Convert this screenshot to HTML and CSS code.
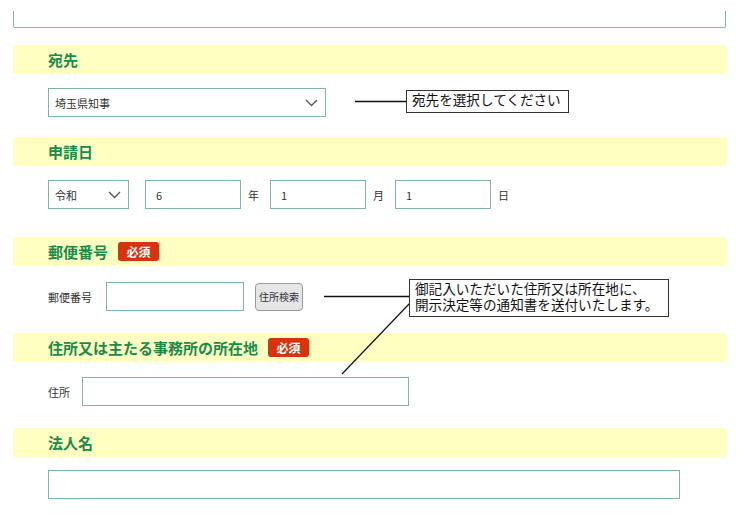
FILE: index.html
```html
<!DOCTYPE html>
<html lang="ja">
<head>
<meta charset="utf-8">
<link rel="stylesheet" href="styles.css">
</head>
<body>
<div class="page">
  <div class="prev-box"></div>

  <section class="section s1">
    <h2 class="band">宛先</h2>
    <div class="body">
      <div class="select sel-wide">
        <span>埼玉県知事</span>
        <svg class="chev" width="13" height="8" viewBox="0 0 13 8"><path d="M1 1 L6.5 6.5 L12 1" fill="none" stroke="#555" stroke-width="1.3"/></svg>
      </div>
    </div>
  </section>

  <section class="section s2">
    <h2 class="band">申請日</h2>
    <div class="body date-row">
      <div class="select sel-era">
        <span>令和</span>
        <svg class="chev" width="13" height="8" viewBox="0 0 13 8"><path d="M1 1 L6.5 6.5 L12 1" fill="none" stroke="#555" stroke-width="1.3"/></svg>
      </div>
      <div class="input in-date">6</div><span class="unit">年</span>
      <div class="input in-date">1</div><span class="unit">月</span>
      <div class="input in-date">1</div><span class="unit">日</span>
    </div>
  </section>

  <section class="section s3">
    <h2 class="band">郵便番号<span class="req">必須</span></h2>
    <div class="body row">
      <span class="label">郵便番号</span>
      <div class="input in-zip"></div>
      <button class="btn">住所検索</button>
    </div>
  </section>

  <section class="section s4">
    <h2 class="band">住所又は主たる事務所の所在地<span class="req">必須</span></h2>
    <div class="body row">
      <span class="label">住所</span>
      <div class="input in-addr"></div>
    </div>
  </section>

  <section class="section s5">
    <h2 class="band">法人名</h2>
    <div class="body">
      <div class="input in-corp"></div>
    </div>
  </section>

  <svg class="lines" width="740" height="524" viewBox="0 0 740 524">
    <line x1="355" y1="101.5" x2="406" y2="101.5" stroke="#111" stroke-width="1.4"/>
    <line x1="324" y1="296.5" x2="409" y2="296.5" stroke="#111" stroke-width="1.4"/>
    <line x1="410" y1="303" x2="342" y2="374" stroke="#111" stroke-width="1.2"/>
  </svg>
  <div class="note note1">宛先を選択してください</div>
  <div class="note note2"><span class="note-line">御記入いただいた住所又は所在地に、</span><span class="note-line">開示決定等の通知書を送付いたします。</span></div>
</div>
</body>
</html>
```

FILE: styles.css
```css
* { box-sizing: border-box; }
html, body { margin: 0; padding: 0; background: #fff; }
body {
  font-family: "Noto Sans CJK JP", "Noto Sans", sans-serif;
  color: #333;
  width: 740px;
  height: 524px;
  overflow: hidden;
}
.page {
  position: relative;
  width: 740px;
  height: 524px;
  padding: 11px 14px 0 13px;
}
.prev-box {
  height: 17px;
  border: 1px solid #7db5a6;
  border-top: none;
  border-radius: 0 0 2px 2px;
}
.section { margin: 0; }
.s1 { margin-top: 17px; }
.s2 { margin-top: 20px; }
.s3 { margin-top: 28px; }
.s4 { margin-top: 22px; }
.s5 { margin-top: 22px; }
.band {
  margin: 0;
  height: 29px;
  background: #ffffc2;
  color: #1b8a4e;
  font-size: 15px;
  font-weight: 700;
  line-height: 29px;
  padding-left: 35px;
  display: flex;
  align-items: center;
}
.req {
  display: inline-block;
  margin-left: 10px;
  width: 41px;
  height: 19px;
  line-height: 19px;
  background: #d8320f;
  color: #fff;
  font-size: 12px;
  font-weight: 700;
  text-align: center;
  border-radius: 3px;
}
.body {
  padding-left: 35px;
  padding-top: 14px;
  display: flex;
  align-items: center;
}
.s3 .body { padding-top: 16px; }
.s4 .body { padding-top: 15px; }
.s5 .body { padding-top: 13px; }
.select, .input {
  height: 29px;
  border: 1px solid #7db5a6;
  background: #fff;
  font-size: 11px;
  color: #333;
  display: flex;
  align-items: center;
}
.select {
  justify-content: space-between;
  padding: 0 6px 0 6px;
}
.sel-wide { width: 278px; }
.sel-era { width: 81px; }
.chev { margin-right: 1px; }
.input { padding-left: 10px; }
.in-date { width: 96px; }
.sel-era + .input { margin-left: 16px; }
.unit {
  font-size: 11px;
  color: #333;
  margin: 0 11px 0 7px;
  width: 11px;
}
.label {
  font-size: 11px;
  color: #333;
}
.in-zip { width: 138px; margin-left: 14px; }
.btn {
  margin-left: 11px;
  width: 48px;
  height: 28px;
  padding: 0;
  border: 1px solid #999;
  border-radius: 4px;
  background: #e6e6e6;
  font-family: inherit;
  font-size: 10px;
  color: #333;
}
.in-addr { width: 327px; margin-left: 12px; }
.in-corp { width: 632px; }
.lines {
  position: absolute;
  left: 0;
  top: 0;
  pointer-events: none;
}
.note {
  position: absolute;
  background: #fff;
  border: 1px solid #333;
  color: #111;
  font-family: "Liberation Sans", "Noto Sans CJK JP", sans-serif;
  font-size: 13.6px;
  line-height: 16px;
  padding: 2px 5px;
  white-space: nowrap;
}
.note-line {
  display: block;
  height: 16px;
  line-height: 16px;
}
.note1 { left: 406px; top: 90px; width: 163px; height: 23px; padding-top: 2px; }
.note2 { left: 409px; top: 279px; width: 260px; height: 38px; padding-top: 2px; }
```
